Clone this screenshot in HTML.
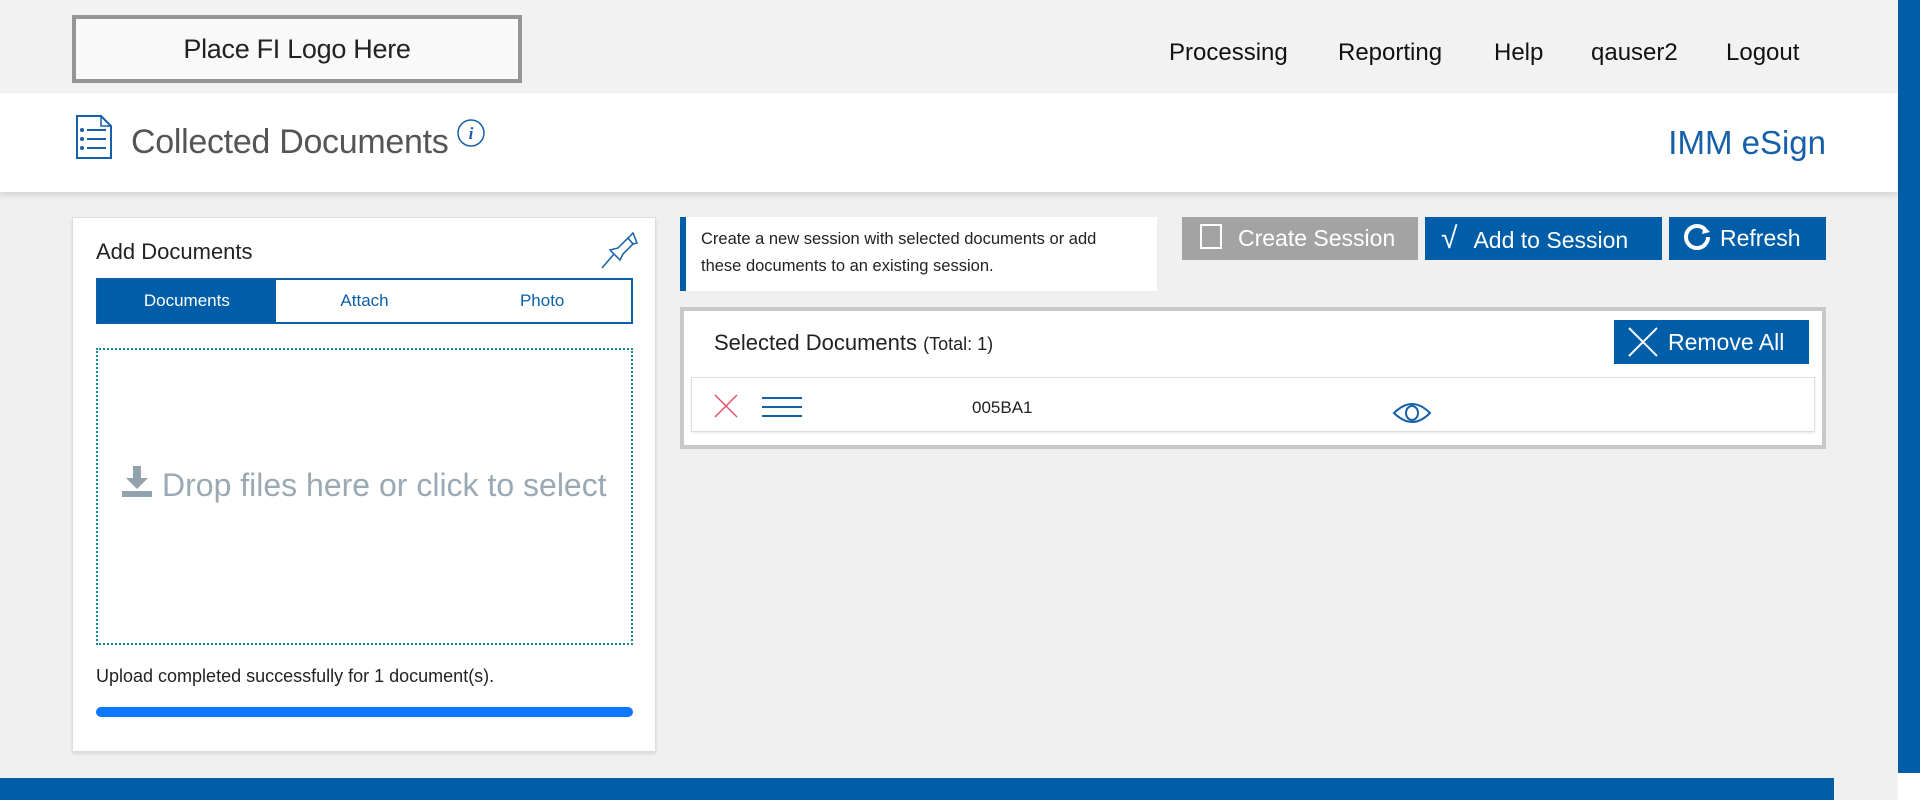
<!DOCTYPE html>
<html><head><meta charset="utf-8"><style>
*{box-sizing:border-box;margin:0;padding:0}
body{width:1920px;height:800px;background:#f0f0f0;font-family:"Liberation Sans",sans-serif;position:relative;overflow:hidden;color:#222}
.abs{position:absolute}
.top{left:0;top:0;width:1898px;height:93px;background:#f2f2f2}
.logo{left:72px;top:15px;width:450px;height:68px;border:4px solid #959595;background:#f9f9f9;font-size:27px;color:#222;text-align:center;line-height:60px;letter-spacing:-0.3px}
.nav{top:39px;font-size:24px;color:#111}
.band{left:0;top:93px;width:1898px;height:99px;background:#fff;box-shadow:0 3px 6px rgba(0,0,0,.12)}
.title{left:131px;top:123px;font-size:34px;color:#555;letter-spacing:-0.3px}
.imm{right:94px;top:124px;font-size:33px;color:#1560a8}
.panel{left:72px;top:217px;width:584px;height:535px;background:#fff;border:1px solid #dedede;box-shadow:0 2px 3px rgba(0,0,0,.1)}
.tabs{left:96px;top:278px;width:537px;height:46px;border:2px solid #0a5fa8;display:flex}
.tabs div{flex:1;text-align:center;line-height:42px;font-size:17px;color:#0a5fa8}
.tabs .on{background:#005ea8;color:#fff}
.drop{left:96px;top:348px;width:537px;height:297px;border:2px dotted #14879a}
.btn{top:217px;height:43px;background:#005ea8;color:#fff;font-size:23px;line-height:43px}
.sel{left:680px;top:307px;width:1146px;height:142px;border:4px solid #c8c8c8;background:#fff}
.row{left:691px;top:377px;width:1124px;height:55px;border:1px solid #ddd;background:#fff;box-shadow:0 1px 2px rgba(0,0,0,.1)}
</style></head><body>
<div class="abs top"></div>
<div class="abs logo">Place FI Logo Here</div>
<div class="abs nav" style="left:1169px">Processing</div>
<div class="abs nav" style="left:1338px">Reporting</div>
<div class="abs nav" style="left:1494px">Help</div>
<div class="abs nav" style="left:1591px">qauser2</div>
<div class="abs nav" style="left:1726px">Logout</div>
<div class="abs" style="left:1898px;top:0;width:22px;height:773px;background:#005ea8"></div>
<div class="abs" style="left:1898px;top:773px;width:22px;height:27px;background:#fff"></div>
<div class="abs band"></div>
<svg class="abs" style="left:75px;top:114px" width="38" height="46" viewBox="0 0 38 46"><path d="M2 2H26L36 12V44H2Z" fill="none" stroke="#1560a8" stroke-width="2"/><path d="M26 2V12H36" fill="none" stroke="#1560a8" stroke-width="1.5"/><g fill="#1560a8"><circle cx="7" cy="16" r="2"/><circle cx="7" cy="25" r="2"/><circle cx="7" cy="34" r="2"/><rect x="12" y="15" width="19" height="2"/><rect x="12" y="24" width="19" height="2"/><rect x="12" y="33" width="19" height="2"/></g></svg>
<div class="abs title">Collected Documents</div>
<svg class="abs" style="left:456px;top:118px" width="30" height="30"><circle cx="15" cy="15" r="13" fill="none" stroke="#1560a8" stroke-width="1.5"/><text x="15" y="21" text-anchor="middle" font-family="Liberation Serif" font-style="italic" font-weight="bold" font-size="17" fill="#1560a8">i</text></svg>
<div class="abs imm">IMM eSign</div>

<div class="abs panel"></div>
<div class="abs" style="left:96px;top:239px;font-size:22px;color:#222">Add Documents</div>
<svg class="abs" style="left:600px;top:232px" width="40" height="38" viewBox="0 0 40 38"><path d="M2 36L14 22M10 18L20 28L23 22L33 12L28 6L18 16Z" fill="none" stroke="#1560a8" stroke-width="1.5"/><path d="M28 6L33 1L37 11L33 12" fill="none" stroke="#1560a8" stroke-width="1.5"/></svg>
<div class="abs tabs"><div class="on">Documents</div><div>Attach</div><div>Photo</div></div>
<div class="abs drop"></div>
<svg class="abs" style="left:122px;top:466px" width="30" height="32" viewBox="0 0 30 32"><path d="M11 0H19V12H26L15 23L4 12H11Z" fill="#93a3ad"/><rect x="0" y="25" width="30" height="6" fill="#93a3ad"/></svg>
<div class="abs" style="left:162px;top:467px;font-size:32px;color:#9aa9b3">Drop files here or click to select</div>
<div class="abs" style="left:96px;top:666px;font-size:18px;color:#222">Upload completed successfully for 1 document(s).</div>
<div class="abs" style="left:96px;top:707px;width:537px;height:10px;border-radius:5px;background:#0a78ff"></div>

<div class="abs" style="left:680px;top:217px;width:477px;height:74px;background:#fff;border-left:6px solid #005ea8"></div>
<div class="abs" style="left:701px;top:226px;font-size:16.5px;line-height:27px;color:#222">Create a new session with selected documents or add<br>these documents to an existing session.</div>
<div class="abs btn" style="left:1182px;width:236px;background:#a3a3a3"><span style="display:inline-block;width:22px;height:25px;border:2px solid #fff;margin:0 16px 0 18px;vertical-align:-3px"></span>Create Session</div>
<div class="abs btn" style="left:1425px;width:237px"><span style="margin:0 16px 0 16px;font-size:30px">√</span>Add to Session</div>
<div class="abs btn" style="left:1669px;width:157px"><svg style="vertical-align:-6px;margin:0 8px 0 13px" width="30" height="30"><circle cx="15" cy="15" r="11" fill="none" stroke="#fff" stroke-width="4" stroke-dasharray="60 10"/><path d="M22 4L28 10L20 12Z" fill="#fff"/></svg>Refresh</div>

<div class="abs sel"></div>
<div class="abs" style="left:714px;top:330px;font-size:22px;color:#222">Selected Documents <span style="font-size:18px">(Total: 1)</span></div>
<div class="abs btn" style="left:1614px;top:320px;width:195px;height:44px;line-height:44px"><svg style="vertical-align:-7px;margin:0 10px 0 14px" width="30" height="30"><path d="M1 1L29 29M29 1L1 29" stroke="#fff" stroke-width="2"/></svg>Remove All</div>
<div class="abs row"></div>
<svg class="abs" style="left:714px;top:394px" width="24" height="24"><path d="M1 1L23 23M23 1L1 23" stroke="#e0506a" stroke-width="1.5"/></svg>
<svg class="abs" style="left:762px;top:396px" width="40" height="24"><rect y="1" width="40" height="2" fill="#1560a8"/><rect y="10" width="40" height="2" fill="#1560a8"/><rect y="19" width="40" height="2" fill="#1560a8"/></svg>
<div class="abs" style="left:972px;top:398px;font-size:17px;color:#222">005BA1</div>
<svg class="abs" style="left:1392px;top:401px" width="40" height="24"><path d="M2 12Q20 -6 38 12Q20 30 2 12Z" fill="none" stroke="#1560a8" stroke-width="2"/><ellipse cx="20" cy="12" rx="6" ry="7" fill="none" stroke="#1560a8" stroke-width="2"/></svg>

<div class="abs" style="left:0;top:778px;width:1834px;height:22px;background:#005ea8"></div>
</body></html>
